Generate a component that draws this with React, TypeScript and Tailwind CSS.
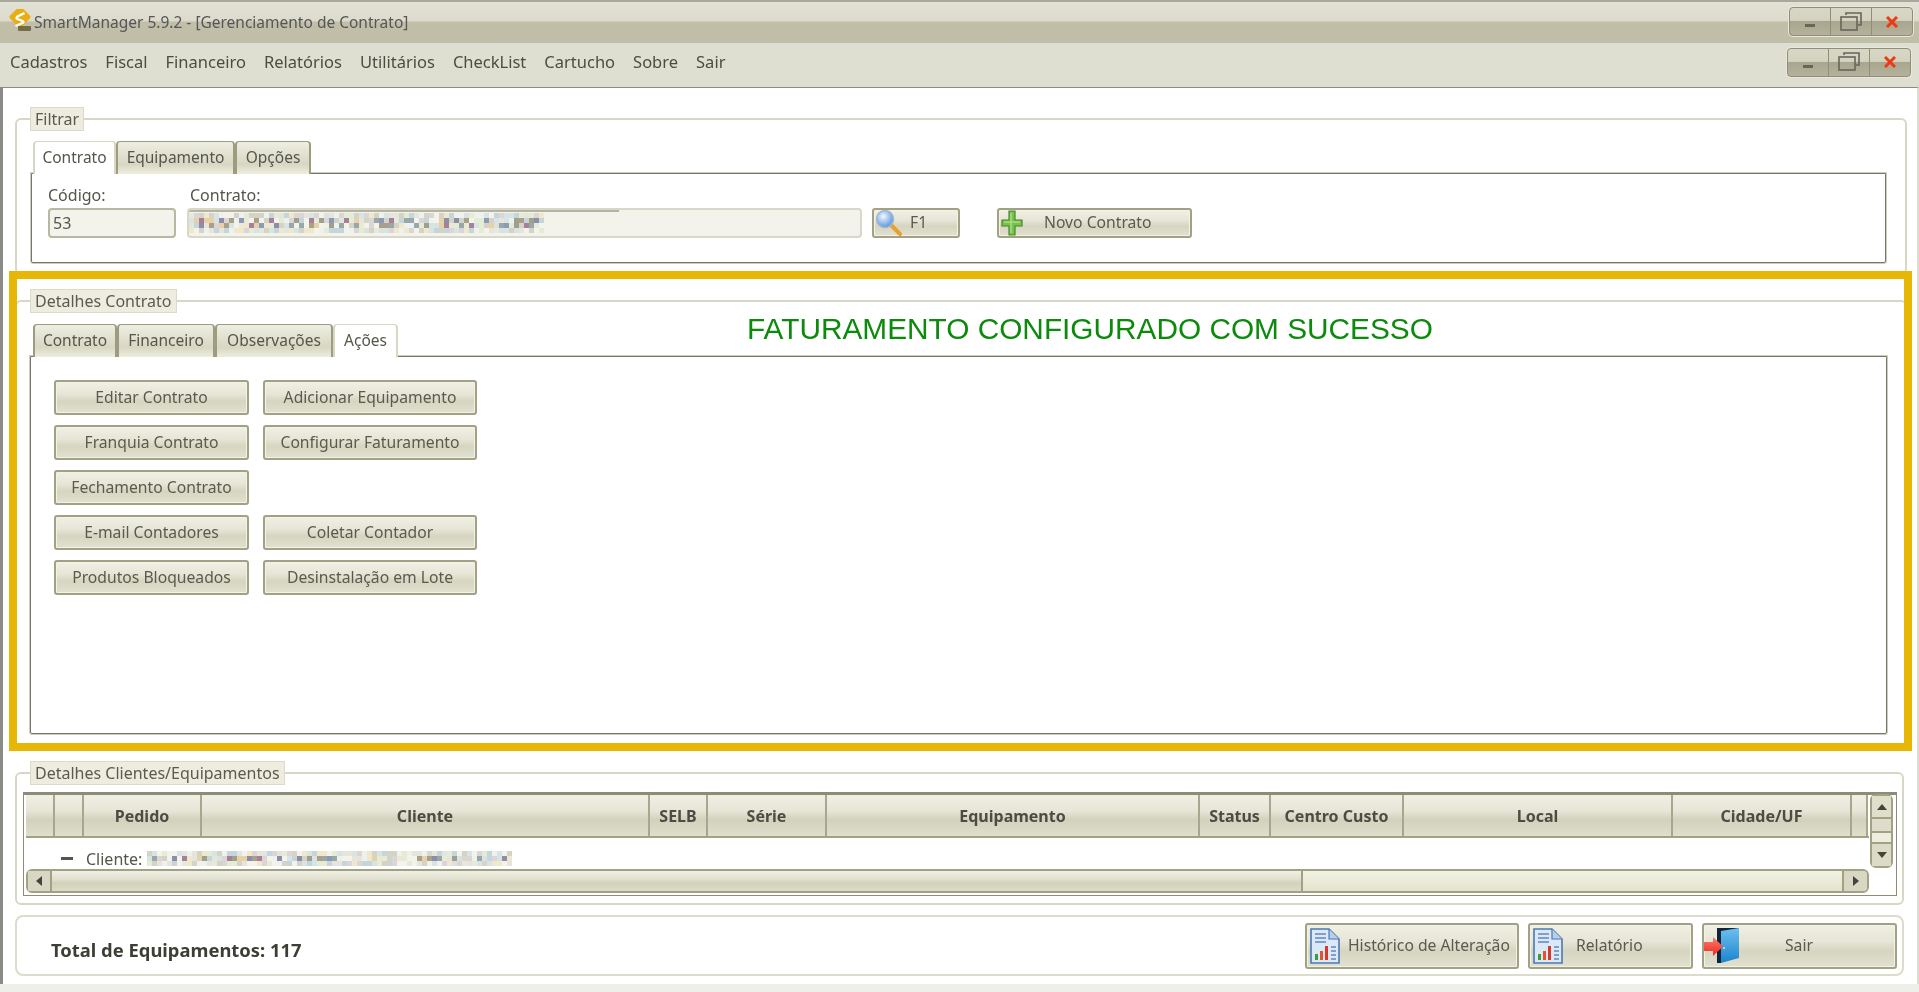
import type { ReactNode } from "react";

const FONT = "font-['Noto_Sans','Open_Sans',sans-serif]";
const BTN =
  "flex items-center justify-center rounded-[3px] border-2 border-[#a3a184] bg-[linear-gradient(#f0f0e4_0%,#e6e5d6_40%,#d6d5c0_62%,#e2e1d0_100%)] text-[15.7px] text-[#5a5a50] shadow-[inset_0_0_0_1px_#f2f2e8]";
const PANEL = "rounded-b-[2px] border border-[#77766a] shadow-[0_0_0_1px_#cfcebe]";

const MENU = ["Cadastros", "Fiscal", "Financeiro", "Relatórios", "Utilitários", "CheckList", "Cartucho", "Sobre", "Sair"];

const COLS = [
  { w: "w-[29px]", t: "" },
  { w: "w-[29px]", t: "" },
  { w: "w-[118px]", t: "Pedido" },
  { w: "w-[448px]", t: "Cliente" },
  { w: "w-[58px]", t: "SELB" },
  { w: "w-[119px]", t: "Série" },
  { w: "w-[373px]", t: "Equipamento" },
  { w: "w-[71px]", t: "Status" },
  { w: "w-[133px]", t: "Centro Custo" },
  { w: "w-[269px]", t: "Local" },
  { w: "w-[179px]", t: "Cidade/UF" },
  { w: "w-[16px]", t: "" },
];

const LIGHT = ["#e6e5dc", "#d8e4e4", "#c4d6dc", "#f0e8cc", "#ddd5d5", "#d4d4c6", "#e4ecd8", "#eef2ee", "#f3f3ec"];
const DARK = ["#a09f8c", "#8e8ca8", "#a87f98", "#a8a088", "#e8d0a8", "#8c9ab8", "#98a8a8"];

// blurred-out customer data, drawn as mosaic blocks
function Mosaic({ width, height, seed }: { width: number; height: number; seed: number }) {
  const size = 5;
  const rects = [];
  let s = seed;
  for (let y = 0; y < height; y += size) {
    for (let x = 0; x < width; x += size) {
      s = (s * 16807) % 2147483647;
      const mid = y >= size && y < height - size;
      const useDark = mid && s % 100 < 42;
      const fill = useDark ? DARK[(s >> 8) % DARK.length] : LIGHT[(s >> 8) % LIGHT.length];
      rects.push(<rect key={`${x}-${y}`} x={x} y={y} width={size} height={size} fill={fill} />);
    }
  }
  return (
    <svg width={width} height={height} className="shrink-0">
      {rects}
    </svg>
  );
}

function Logo() {
  return (
    <svg width="26" height="28" viewBox="0 0 26 28" className="shrink-0">
      <rect x="4" y="0" width="16" height="16" rx="2" transform="rotate(45 12 8)" fill="#e9ae14" />
      <path d="M16.5 4 L9.5 7.5 Q7.5 9 9.5 10 L14.5 12 Q16.5 13 14.5 14 L7.5 17" fill="none" stroke="#fff" strokeWidth="2.4" />
      <rect x="10" y="17" width="13" height="5" rx="1" fill="#5b5028" opacity="0.75" />
    </svg>
  );
}

function SearchIcon() {
  return (
    <svg width="28" height="28" viewBox="0 0 28 28" className="shrink-0">
      <defs>
        <radialGradient id="lens" cx="0.4" cy="0.35" r="0.7">
          <stop offset="0" stopColor="#f2f8ff" />
          <stop offset="1" stopColor="#4f8fdc" />
        </radialGradient>
      </defs>
      <path d="M16 16 L25 25" stroke="#e8a030" strokeWidth="4" strokeLinecap="round" />
      <circle cx="10" cy="10" r="8.5" fill="url(#lens)" stroke="#9fb6d0" strokeWidth="1.5" />
    </svg>
  );
}

function PlusIcon() {
  return (
    <svg width="22" height="26" viewBox="0 0 22 26" className="shrink-0">
      <path d="M8 1 H14 V10 H21 V16 H14 V25 H8 V16 H1 V10 H8 Z" fill="#7cc04c" stroke="#3f8a2a" strokeWidth="1.2" />
      <path d="M10 3 V23 M3 12 H19" stroke="#a8dc80" strokeWidth="1.5" />
    </svg>
  );
}

function ReportIcon() {
  return (
    <svg width="30" height="36" viewBox="0 0 30 36" className="shrink-0">
      <path d="M1 1 H19 L29 11 V35 H1 Z" fill="#dce8f6" stroke="#4b79b5" strokeWidth="1.6" />
      <path d="M19 1 V11 H29" fill="#b8cfe8" stroke="#4b79b5" strokeWidth="1.2" />
      <path d="M5 6 H16 M5 10 H16 M5 14 H16" stroke="#5d88c0" strokeWidth="1.6" />
      <rect x="5" y="26" width="3" height="6" fill="#3b9c3f" />
      <rect x="10" y="23" width="3" height="9" fill="#e2552a" />
      <rect x="15" y="18" width="3" height="14" fill="#d63a2a" />
      <path d="M21 19 H26 M21 23 H26 M21 27 H26 M21 31 H26" stroke="#5d88c0" strokeWidth="1.6" />
    </svg>
  );
}

function DoorIcon() {
  return (
    <svg width="38" height="37" viewBox="0 0 38 37" className="shrink-0">
      <defs>
        <linearGradient id="door" x1="0" y1="0" x2="0" y2="1">
          <stop offset="0" stopColor="#6cc0ee" />
          <stop offset="1" stopColor="#1b84cc" />
        </linearGradient>
        <linearGradient id="arrow" x1="0" y1="0" x2="0" y2="1">
          <stop offset="0" stopColor="#ff7a70" />
          <stop offset="1" stopColor="#ee2a20" />
        </linearGradient>
      </defs>
      <path d="M13 1 H35 V4 H17 V36 H13 Z" fill="#12233c" />
      <path d="M17 4 L35 1 V31 L17 36 Z" fill="url(#door)" />
      <path d="M0 15 H9 V10 L19 19.5 L9 29 V24 H0 Z" fill="url(#arrow)" />
      <circle cx="20" cy="21" r="1" fill="#d8e8f4" />
    </svg>
  );
}

function WindowControls({ className = "" }: { className?: string }) {
  const seg = "flex h-full flex-1 items-center justify-center border-r border-[#8f8e78] last:border-r-0";
  return (
    <div className={`flex h-[29px] w-[124px] rounded-[4px] border border-[#8f8e78] bg-[linear-gradient(#d8d7c6_0%,#d4d3c0_46%,#a8a68e_50%,#b4b29c_100%)] shadow-[0_0_0_1px_#e8e8dc] ${className}`}>
      <div className={seg}>
        <span className="mt-[8px] h-[3px] w-[10px] bg-[#66665a]" />
      </div>
      <div className={seg}>
        <svg width="22" height="20" viewBox="0 0 22 20" fill="none" stroke="#66665a" strokeWidth="1.6">
          <path d="M6 3 V1 H21 V13 H18" />
          <rect x="1" y="5" width="16" height="13" />
        </svg>
      </div>
      <div className={seg}>
        <svg width="12" height="12" viewBox="0 0 12 12" stroke="#ee3a12" strokeWidth="3">
          <path d="M1 1 L11 11 M11 1 L1 11" />
        </svg>
      </div>
    </div>
  );
}

function Tab({ label, active, w }: { label: string; active?: boolean; w: string }) {
  return (
    <div
      className={`flex h-[33px] shrink-0 items-center justify-center rounded-t-[4px] border-x-2 border-t text-[15.5px] ${w} ${
        active
          ? "relative z-10 border-[#d8d7c4] bg-white"
          : "border-[#9e9c80] bg-[linear-gradient(#eeeee2_0%,#d8d7c4_70%,#eeeedc_100%)]"
      }`}
    >
      {label}
    </div>
  );
}

function Group({ title, className, children }: { title: string; className: string; children: ReactNode }) {
  return (
    <fieldset className={`ml-[12px] rounded-[6px] border-2 border-[#d8d7c6] ${className}`}>
      <legend className="ml-[13px] flex h-[24px] items-center border border-[#dcdbca] bg-[#edecdf] px-[4px] text-[16px] text-[#5a5a50]">
        {title}
      </legend>
      {children}
    </fieldset>
  );
}

function ActionButton({ label }: { label: string }) {
  return <div className={`${BTN} h-[35px]`}>{label}</div>;
}

export default function App() {
  return (
    <div className={`relative flex h-[992px] w-[1919px] flex-col overflow-hidden bg-[#efefea] text-[16px] text-[#55554a] blur-[0.4px] ${FONT}`}>
      {/* title bar */}
      <header className="flex h-[43px] shrink-0 items-start justify-between border-t-2 border-[#a8a89c] bg-[linear-gradient(#e2e1d5_0%,#dcdbcc_45%,#c1bfa8_50%,#c0bea8_100%)] pl-[8px] pr-[6px]">
        <div className="flex h-[42px] items-center text-[15.5px] text-[#55555a]">
          <Logo />
          <span>SmartManager 5.9.2 - [Gerenciamento de Contrato]</span>
        </div>
        <WindowControls className="mt-[5px]" />
      </header>

      {/* menu */}
      <nav className="flex h-[44px] shrink-0 items-center justify-between bg-[#dfdfd1] pb-[6px] pl-[10px] pr-[8px]">
        <div className="flex gap-[18px] text-[16.5px] text-[#4c4c44]">
          {MENU.map((m) => (
            <span key={m}>{m}</span>
          ))}
        </div>
        <WindowControls />
      </nav>

      <main className="flex h-[897px] shrink-0 flex-col border-l-[3px] border-r-2 border-t border-[#8a8a86] border-r-[#dcdcd0] bg-white pt-[19px]">
        <Group title="Filtrar" className="h-[168px] w-[1892px]">
          <div className="pl-[14px] pr-[19px] pt-[10px]">
            <div className="flex pl-[2px]">
              <Tab label="Contrato" active w="w-[83px]" />
              <Tab label="Equipamento" w="w-[119px]" />
              <Tab label="Opções" w="w-[76px]" />
            </div>
            <div className={`-mt-px flex h-[90px] items-end pb-[24px] pl-[16px] ${PANEL}`}>
              <div className="w-[128px]">
                <div className="mb-[3px] h-[20px] leading-[20px]">Código:</div>
                <div className="flex h-[30px] items-center rounded-[4px] border-2 border-[#b8b7a2] bg-[#f3f3ec] pl-[3px]">53</div>
              </div>
              <div className="ml-[11px] w-[675px]">
                <div className="mb-[3px] h-[20px] pl-[3px] leading-[20px]">Contrato:</div>
                <div className="flex h-[30px] items-center overflow-hidden rounded-[4px] border-2 border-[#d8d7c8] bg-[#f3f3ec] bg-[linear-gradient(#b4b3a2,#b4b3a2)] bg-[size:430px_2px] bg-no-repeat">
                  <Mosaic width={355} height={20} seed={77} />
                </div>
              </div>
              <div className={`${BTN} ml-[10px] h-[30px] w-[88px] justify-start pl-[1px]`}>
                <SearchIcon />
                <span className="ml-[7px]">F1</span>
              </div>
              <div className={`${BTN} ml-[37px] h-[30px] w-[195px] justify-start pl-[2px]`}>
                <PlusIcon />
                <span className="ml-[21px]">Novo Contrato</span>
              </div>
            </div>
          </div>
        </Group>

        <Group title="Detalhes Contrato" className="mt-[14px] h-[458px] w-[1892px]">
          <div className="pl-[13px] pr-[18px] pt-[11px]">
            <div className="flex pl-[3px]">
              <Tab label="Contrato" w="w-[84px]" />
              <Tab label="Financeiro" w="w-[98px]" />
              <Tab label="Observações" w="w-[118px]" />
              <Tab label="Ações" active w="w-[65px]" />
              <div className="ml-[349px] -mt-[12px] whitespace-nowrap font-['Liberation_Sans',sans-serif] text-[29.8px] leading-[34px] text-[#0b8a0b]">
                FATURAMENTO CONFIGURADO COM SUCESSO
              </div>
            </div>
            <div className={`-mt-px h-[378px] pl-[23px] pt-[23px] ${PANEL}`}>
              <div className="grid grid-cols-[195px_214px] gap-x-[14px] gap-y-[10px]">
                <ActionButton label="Editar Contrato" />
                <ActionButton label="Adicionar Equipamento" />
                <ActionButton label="Franquia Contrato" />
                <ActionButton label="Configurar Faturamento" />
                <ActionButton label="Fechamento Contrato" />
                <div />
                <ActionButton label="E-mail Contadores" />
                <ActionButton label="Coletar Contador" />
                <ActionButton label="Produtos Bloqueados" />
                <ActionButton label="Desinstalação em Lote" />
              </div>
            </div>
          </div>
        </Group>

        <Group title="Detalhes Clientes/Equipamentos" className="mt-[14px] h-[144px] w-[1889px]">
          <div className="ml-[6px] mr-[5px] mt-[7px] flex h-[104px] border border-t-[3px] border-[#8e8c74] pl-[2px] pr-[3px]">
            <div className="flex w-[1843px] flex-col">
              <div className="flex h-[43px] border-b-2 border-[#a3a184]">
                {COLS.map((c, i) => (
                  <div
                    key={i}
                    className={`flex items-center justify-center border-r-2 border-[#a8a68c] bg-[linear-gradient(#efefe4_0%,#e6e5d6_40%,#d2d1bc_60%,#e0dfcc_100%)] text-[16px] font-bold text-[#4c4c44] ${c.w}`}
                  >
                    {c.t}
                  </div>
                ))}
              </div>
              <div className="flex h-[31px] items-center overflow-hidden pl-[35px] pt-[10px]">
                <span className="h-[3px] w-[12px] bg-[#55554a]" />
                <span className="ml-[13px]">Cliente:</span>
                <span className="ml-[5px]">
                  <Mosaic width={365} height={15} seed={1234} />
                </span>
              </div>
              <div className="flex h-[24px] rounded-[6px] border-2 border-[#a3a184] bg-[linear-gradient(#f2f2e4,#e4e3ce)]">
                <div className="flex w-[24px] items-center justify-center border-r-2 border-[#a3a184] bg-[#d8d7c4]">
                  <span className="h-0 w-0 border-y-[5px] border-r-[6px] border-y-transparent border-r-[#44443c]" />
                </div>
                <div className="w-[1251px] border-r-2 border-[#a3a184] bg-[linear-gradient(#efefe4_0%,#e2e1d0_40%,#d2d1bc_60%,#dcdbc8_100%)]" />
                <div className="flex-1" />
                <div className="flex w-[25px] items-center justify-center rounded-r-[4px] border-l-2 border-[#a3a184] bg-[#d8d7c4]">
                  <span className="h-0 w-0 border-y-[5px] border-l-[6px] border-y-transparent border-l-[#44443c]" />
                </div>
              </div>
            </div>
            <div className="-mt-px ml-[1px] flex h-[74px] w-[23px] flex-col rounded-[6px] border-2 border-[#a3a184] bg-[linear-gradient(#e8e7d6,#f2f2e4)]">
              <div className="flex h-[23px] items-center justify-center border-b-2 border-[#a3a184] bg-[#e0dfcc]">
                <span className="h-0 w-0 border-x-[5px] border-b-[6px] border-x-transparent border-b-[#44443c]" />
              </div>
              <div className="h-[14px] border-b-2 border-[#a3a184] bg-[#dedcca]" />
              <div className="flex-1" />
              <div className="flex h-[24px] items-center justify-center border-t-2 border-[#a3a184] bg-[#dcdbc8]">
                <span className="h-0 w-0 border-x-[5px] border-t-[6px] border-x-transparent border-t-[#44443c]" />
              </div>
            </div>
          </div>
        </Group>

        <div className="ml-[12px] mt-[10px] flex h-[61px] w-[1889px] items-center justify-between rounded-[8px] border-2 border-[#dddccc] pl-[34px] pr-[5px]">
          <span className="mt-[9px] text-[18.4px] font-bold text-[#3e3e36]">Total de Equipamentos: 117</span>
          <div className="flex gap-[9px]">
            <div className={`${BTN} h-[46px] w-[214px] justify-start pl-[3px]`}>
              <ReportIcon />
              <span className="ml-[8px] whitespace-nowrap">Histórico de Alteração</span>
            </div>
            <div className={`${BTN} h-[46px] w-[165px] justify-start pl-[3px]`}>
              <ReportIcon />
              <span className="ml-[13px]">Relatório</span>
            </div>
            <div className={`${BTN} h-[46px] w-[195px] justify-start pl-0`}>
              <DoorIcon />
              <span className="ml-[43px]">Sair</span>
            </div>
          </div>
        </div>
      </main>

      {/* highlight frame drawn over the screenshot */}
      <div className="pointer-events-none absolute left-[9px] top-[271px] h-[480px] w-[1903px] border-[8px] border-[#e6b805]" />
    </div>
  );
}
